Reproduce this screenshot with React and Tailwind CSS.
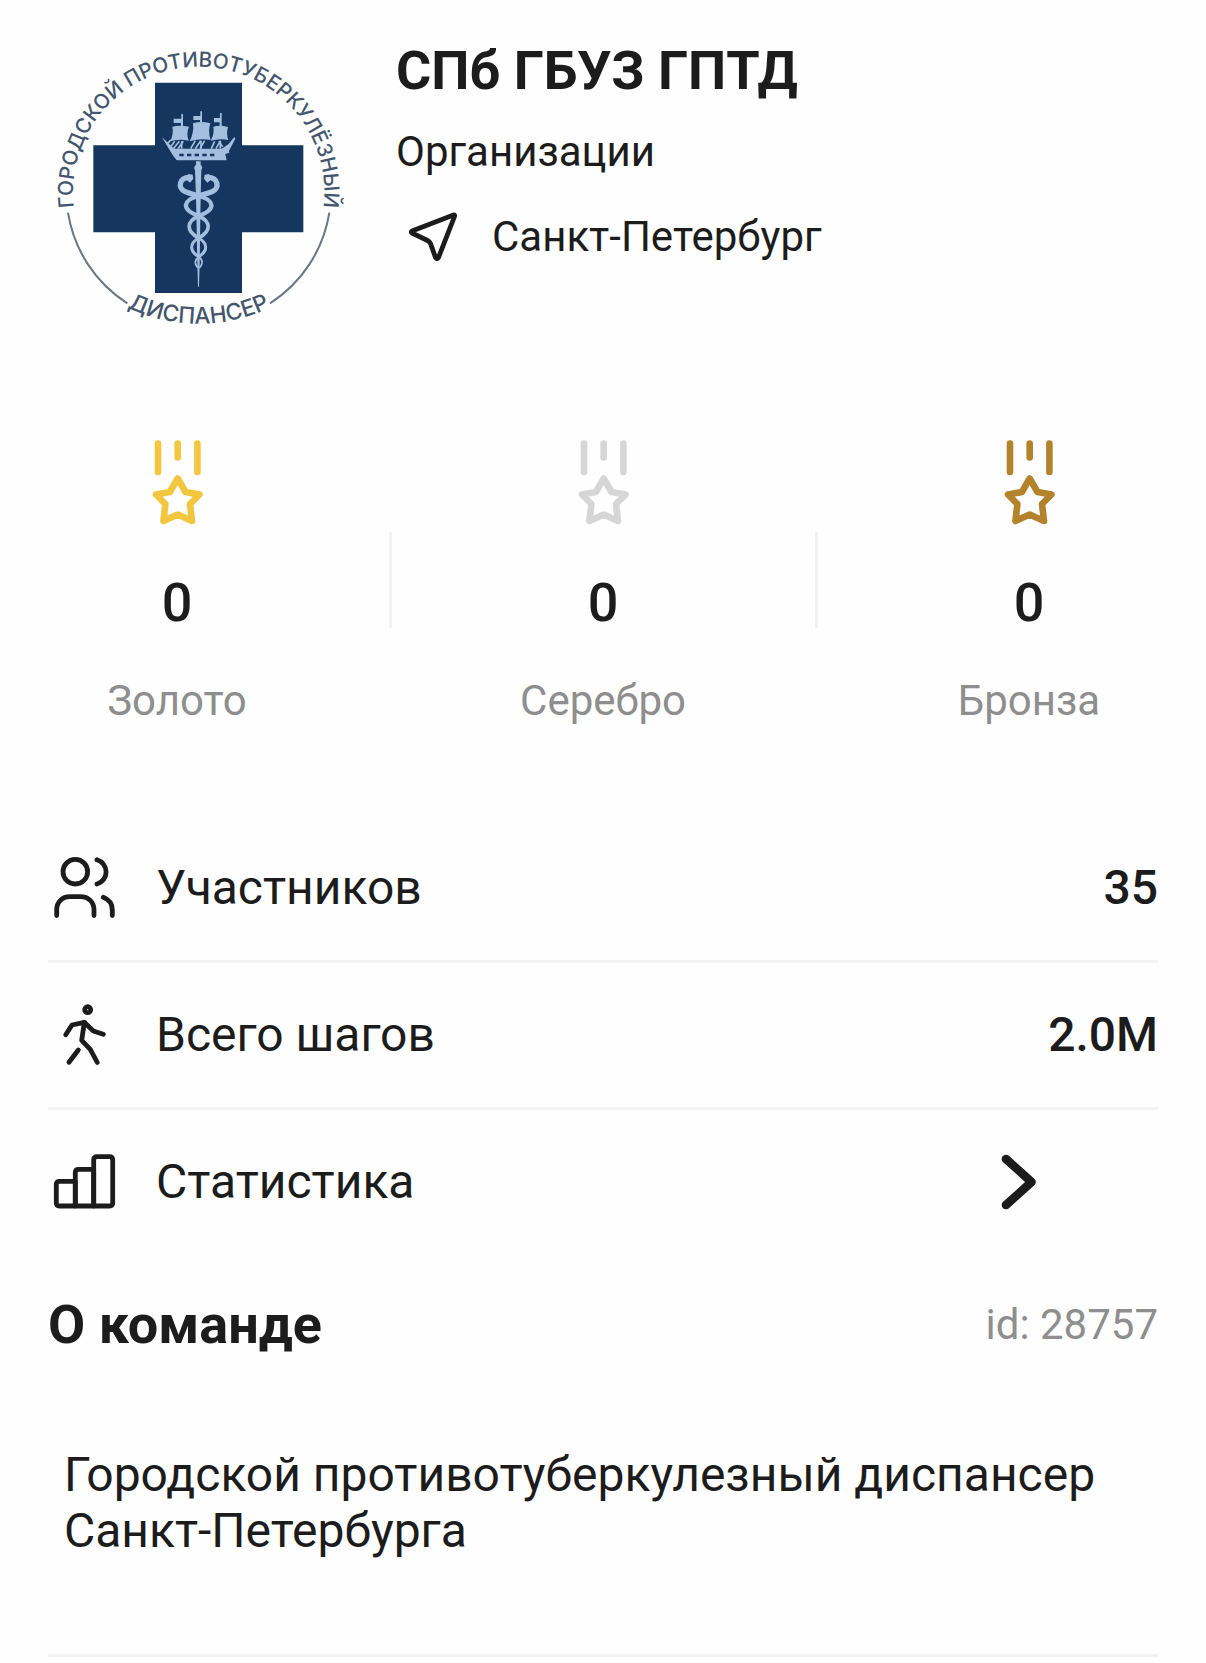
import { Fragment } from 'react';

const medals = [
  { label: 'Золото', count: 0, color: 'text-[#f3c63f]' },
  { label: 'Серебро', count: 0, color: 'text-[#d6d6d6]' },
  { label: 'Бронза', count: 0, color: 'text-[#b2832b]' },
];

function TeamLogo() {
  return (
    <svg viewBox="24 27 900 900" className="w-[300px] h-[300px] shrink-0" role="img" aria-label="Логотип команды">
      <defs>
        <path id="arcTop" d="M103 542A377 377 0 1 1 849 542" />
        <path id="arcBottom" d="M216 808A500 500 0 0 0 736 808" />
      </defs>
      <g fill="#44566e" fontFamily="Inter, 'Liberation Sans', sans-serif" fontWeight="500">
        <text fontSize="62" textAnchor="middle">
          <textPath href="#arcTop" startOffset="50%">ГОРОДСКОЙ ПРОТИВОТУБЕРКУЛЁЗНЫЙ</textPath>
        </text>
        <text fontSize="68" textAnchor="middle">
          <textPath href="#arcBottom" startOffset="50%">ДИСПАНСЕР</textPath>
        </text>
      </g>
      <g fill="none" stroke="#6b7684" strokeWidth="6">
        <path d="M84 548A397 397 0 0 0 262 820" />
        <path d="M868 548A397 397 0 0 1 690 820" />
      </g>
      <path fill="#15365f" d="M345 158H606V346H790V607H606V789H345V607H160V346H345Z" />

      {/* ship */}
      <g fill="#a3bfe0">
        <path d="M366 322L384 338L402 356H545L566 342L583 321L586 326L567 362L568 368L556 372L560 391H410L396 372Z" />
        <path d="M397 290Q418 284 447 290Q438 310 446 332Q418 326 390 334Q402 312 397 290Z" />
        <path d="M459 280Q484 272 511 280Q503 304 512 330Q480 324 449 334Q463 306 459 280Z" />
        <path d="M520 290Q540 284 564 291Q558 310 565 330Q542 324 512 332Q524 310 520 290Z" />
        <path d="M401 266H424V252H429V290H423V279H401ZM460 258H481V244H486V280H480V270H460ZM522 264H540V249H545V290H539V277H522Z" />
      </g>
      <g stroke="#a3bfe0" strokeWidth="5" fill="none">
        <path d="M388 356L404 334M400 356L418 334M414 356L430 334M452 356L466 332M466 356L482 332M480 356L494 332M514 356L524 334M528 356L540 334M380 344L392 330M548 350L536 334" />
        <path d="M425 334V356M483 332V356M541 332V356" />
      </g>
      <path stroke="#15365f" strokeWidth="8" strokeDasharray="13 10" d="M418 375H524" />

      {/* caduceus */}
      <g fill="none" stroke="#a3bfe0" strokeLinecap="round">
        <path strokeWidth="16" d="M448 442C418 442 412 474 434 484C448 490 462 493 476 498" />
        <path strokeWidth="16" d="M504 442C534 442 540 474 518 484C504 490 490 493 476 498" />
        <path strokeWidth="13" d="M476 498C524 510 530 538 476 558M476 498C428 510 422 538 476 558" />
        <path strokeWidth="11" d="M476 558C512 574 516 602 476 624M476 558C440 574 436 602 476 624" />
        <path strokeWidth="9" d="M476 624C504 640 504 664 476 680M476 624C448 640 448 664 476 680" />
        <path strokeWidth="5" d="M476 680C490 690 488 702 480 712M476 680C464 690 464 702 472 712" />
      </g>
      <g fill="#a3bfe0">
        <path d="M468 394H482V404A12 12 0 0 1 484 420L482 500L479 700L477 770H474L472 700L468 500L465 420A12 12 0 0 1 468 404Z" />
        <path d="M444 432L458 434L460 446L450 458L440 450ZM508 432L494 434L492 446L502 458L512 450Z" />
      </g>
    </svg>
  );
}

function MedalIcon({ className }) {
  return (
    <svg viewBox="0 0 96 96" className={`w-24 h-24 ${className}`} fill="none" stroke="currentColor" strokeWidth="6.6" strokeLinecap="round" strokeLinejoin="round" aria-hidden="true">
      <path d="M29 9.5V38M48.7 9.5V23.5M68.4 9.5V38" />
      <path d="M48.7 44.5L56.5 58L70.5 60.5L61 70L63 87L48.7 80.5L34.4 87L36.4 70L27 60.5L40.9 58Z" />
    </svg>
  );
}

function RowIcon({ children }) {
  return (
    <svg viewBox="0 0 72 72" className="w-[72px] h-[72px] shrink-0" fill="none" stroke="currentColor" strokeWidth="4.8" strokeLinecap="round" strokeLinejoin="round" aria-hidden="true">
      {children}
    </svg>
  );
}

function StatRow({ icon, label, value }) {
  return (
    <div className="flex items-center h-[147px] gap-9 border-b-3 border-[#f2f2f2]">
      <RowIcon>{icon}</RowIcon>
      <span className="flex-1">{label}</span>
      <span className="font-medium">{value}</span>
    </div>
  );
}

export default function App() {
  return (
    <main className="min-h-screen px-12 pt-[39px] bg-[#fefefe] text-[#1c1c1c] font-['Roboto',sans-serif]">
      <header className="flex gap-12">
        <TeamLogo />
        <div>
          <h1 className="text-[54px] leading-[63px] font-bold">СПб ГБУЗ ГПТД</h1>
          <p className="mt-[25px] text-[42px] leading-[49px]">Организации</p>
          <div className="mt-6 flex items-center gap-6 text-[42px] leading-[49px]">
            <RowIcon>
              <path d="M57.5 15L16 31Q14.5 32 16 33L31.5 40.5Q33.5 41.5 34.5 43.5L39.5 57.5Q41 60 42.5 57.5L58.5 16.5Q59 14.5 57.5 15Z" />
            </RowIcon>
            <span>Санкт-Петербург</span>
          </div>
        </div>
      </header>

      <section className="mt-[95px] flex items-center justify-between">
        {medals.map((medal, i) => (
          <Fragment key={medal.label}>
            {i > 0 && <div className="w-[3px] h-24 bg-[#f2f2f2]" />}
            <div className="w-[258px] flex flex-col items-center">
              <MedalIcon className={medal.color} />
              <span className="mt-[41px] text-[54px] leading-[63px] font-medium">{medal.count}</span>
              <span className="mt-[42px] text-[42px] leading-[49px] text-[#8e8e8e]">{medal.label}</span>
            </div>
          </Fragment>
        ))}
      </section>

      <section className="mt-[91px] text-[48px] leading-[56px]">
        <StatRow
          label="Участников"
          value="35"
          icon={
            <>
              <circle cx="27.3" cy="19.7" r="12.3" />
              <path d="M49 7.8A12.6 12.6 0 0 1 49 32" />
              <path d="M8.7 63.5V58C8.7 50 14 44.7 22 44.7H32.5C40.5 44.7 46 50 46 58V63.5" />
              <path d="M55.3 45.3C61 47.5 64.3 52 64.3 58V63.5" />
            </>
          }
        />
        <StatRow
          label="Всего шагов"
          value="2.0M"
          icon={
            <>
              <circle cx="39.7" cy="10.7" r="3" />
              <path d="M17.7 35.7L24 26L36.3 23.3L45.3 32L55.3 35.3" />
              <path d="M36.3 23.3L33.7 41.3L42.3 50.3L49.3 63.5" />
              <path d="M30.3 51L21 63.3" />
            </>
          }
        />
        <button type="button" className="flex items-center w-full h-36 gap-9 text-left">
          <RowIcon>
            <path d="M27.3 60H11.5Q8.3 60 8.3 57V38.5Q8.3 35.3 11.5 35.3H27.3Z" />
            <path d="M27.3 60V26.5Q27.3 23.3 30.5 23.3H45.7V60Z" />
            <path d="M45.7 60V14Q45.7 10.7 49 10.7H61.5Q64.7 10.7 64.7 14V57Q64.7 60 61.5 60Z" />
          </RowIcon>
          <span className="flex-1">Статистика</span>
          <svg viewBox="0 0 84 84" className="w-21 h-21 mr-24" fill="none" stroke="currentColor" strokeWidth="8.6" strokeLinecap="round" strokeLinejoin="round" aria-hidden="true">
            <path d="M28 19L53.5 42L28 65" />
          </svg>
        </button>
      </section>

      <section className="mt-[39px] pb-[95px] border-b-3 border-[#f2f2f2]">
        <div className="flex items-center justify-between">
          <h2 className="text-[54px] leading-[63px] font-bold">О команде</h2>
          <span className="text-[42px] leading-[49px] text-[#8e8e8e]">id: 28757</span>
        </div>
        <p className="mt-[91px] px-4 text-[48px] leading-[56px]">
          Городской противотуберкулезный диспансер Санкт-Петербурга
        </p>
      </section>
    </main>
  );
}
